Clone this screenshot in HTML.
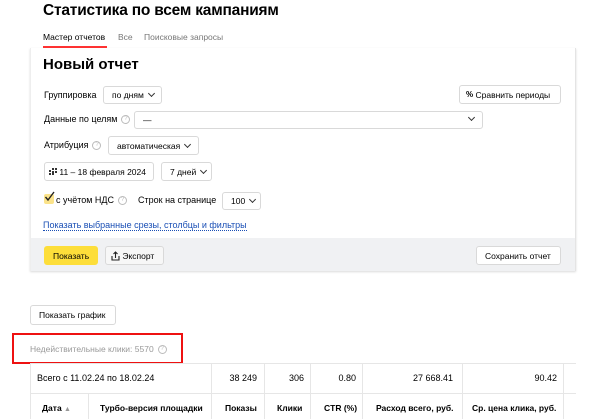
<!DOCTYPE html>
<html><head><meta charset="utf-8"><style>
*{box-sizing:border-box;margin:0;padding:0}
body{width:600px;height:419px;background:#fff;font-family:"Liberation Sans",sans-serif;color:#000;position:relative;overflow:hidden;font-size:9px}
.a{position:absolute;white-space:nowrap}
.btn{position:absolute;border:1px solid #d9d9d9;border-radius:3px;background:#fff;display:flex;align-items:center;padding-left:8px;font-size:8.5px}
.chev{display:inline-block;width:5px;height:5px;border-right:1px solid #333;border-bottom:1px solid #333;transform:rotate(45deg);margin-left:5px;margin-top:-3px}
.q{display:inline-block;width:9px;height:9px;border:1px solid #bbb;border-radius:50%;font-size:6px;color:#bbb;text-align:center;line-height:7px;margin-left:4px;vertical-align:middle}
.vl{position:absolute;top:363px;height:56px;width:1px;background:#e6e6e6}
</style></head><body>
<div class="a" style="left:43px;top:2px;font-size:15.5px;font-weight:bold;letter-spacing:-0.2px">Статистика по всем кампаниям</div>
<div class="a" style="left:43px;top:32px;font-size:8.5px">Мастер отчетов</div>
<div class="a" style="left:118px;top:32px;font-size:8.5px;color:#777">Все</div>
<div class="a" style="left:144px;top:32px;font-size:8.5px;color:#777">Поисковые запросы</div>
<div class="a" style="left:43px;top:46px;width:64px;height:2px;background:#f33"></div>
<div class="a" style="left:30px;top:48px;width:546px;height:223px;border-left:1px solid #eee;border-right:1px solid #e4e4e4;box-shadow:0 1px 2px rgba(0,0,0,.15)"></div>
<div class="a" style="left:31px;top:238px;width:544px;height:33px;background:#f0f1f3"></div>
<div class="a" style="left:43px;top:56px;font-size:15px;font-weight:bold">Новый отчет</div>
<div class="a" style="left:44px;top:90px">Группировка</div>
<div class="btn" style="left:103px;top:86px;width:59px;height:18px">по дням<span class="chev"></span></div>
<div class="btn" style="left:459px;top:85px;width:102px;height:19px;padding-left:6px"><b style="font-size:8px">%</b>&nbsp;Сравнить периоды</div>
<div class="a" style="left:44px;top:114px">Данные по целям<span class="q">?</span></div>
<div class="btn" style="left:134px;top:111px;width:349px;height:18px">—<span class="chev" style="position:absolute;right:8px;top:6px"></span></div>
<div class="a" style="left:44px;top:140px">Атрибуция<span class="q">?</span></div>
<div class="btn" style="left:108px;top:136px;width:91px;height:19px">автоматическая<span class="chev"></span></div>
<div class="btn" style="left:44px;top:162px;width:110px;height:19px;padding-left:4px"><svg width="8" height="7" viewBox="0 0 8 7"><g fill="#333"><rect x="0" y="2" width="2" height="2"/><rect x="3" y="0" width="2" height="2"/><rect x="6" y="0" width="2" height="2"/><rect x="3" y="3" width="2" height="2"/><rect x="6" y="3" width="2" height="2"/><rect x="0" y="5" width="2" height="2"/><rect x="3" y="5" width="2" height="2"/></g></svg>&nbsp;11 – 18 февраля 2024</div>
<div class="btn" style="left:161px;top:162px;width:51px;height:19px">7 дней<span class="chev"></span></div>
<div class="a" style="left:44px;top:194px;width:10px;height:10px;background:#fbe38a;border-radius:2px"></div>
<svg class="a" style="left:44px;top:191px" width="11" height="11" viewBox="0 0 11 11"><path d="M1.5 6 L4 9 L10 1" fill="none" stroke="#222" stroke-width="1.4"/></svg>
<div class="a" style="left:56px;top:195px">с учётом НДС<span class="q">?</span></div>
<div class="a" style="left:138px;top:195px">Строк на странице</div>
<div class="btn" style="left:222px;top:192px;width:39px;height:18px">100<span class="chev"></span></div>
<div class="a" style="left:43px;top:220px;color:#1a4fb5;border-bottom:1px dotted #1a4fb5">Показать выбранные срезы, столбцы и фильтры</div>
<div class="btn" style="left:44px;top:246px;width:54px;height:19px;background:#fdde3a;border-color:#fdde3a">Показать</div>
<div class="btn" style="left:105px;top:246px;width:59px;height:19px;padding-left:5px;background:#f7f7f7"><svg width="9" height="10" viewBox="0 0 9 10"><path d="M4.5 7 V1 M2.5 3 L4.5 1 L6.5 3 M1 5 V9 H8 V5" fill="none" stroke="#222" stroke-width="1.1"/></svg>&nbsp;Экспорт</div>
<div class="btn" style="left:476px;top:246px;width:85px;height:19px">Сохранить отчет</div>
<div class="btn" style="left:30px;top:305px;width:86px;height:20px">Показать график</div>
<div class="a" style="left:12px;top:333px;width:171px;height:31px;border:2px solid #e11"></div>
<div class="a" style="left:30px;top:344px;color:#999;font-size:8.5px">Недействительные клики: 5570<span class="q">?</span></div>
<div class="a" style="left:30px;top:363px;width:546px;height:1px;background:#e6e6e6"></div>
<div class="a" style="left:30px;top:393px;width:546px;height:1px;background:#e6e6e6"></div>
<div class="vl" style="left:30px"></div><div class="vl" style="left:211px"></div><div class="vl" style="left:264px"></div><div class="vl" style="left:310px"></div><div class="vl" style="left:362px"></div><div class="vl" style="left:462px"></div><div class="vl" style="left:563px"></div>
<div class="vl" style="left:88px;top:393px;height:26px"></div>
<div class="a" style="left:37px;top:373px">Всего с 11.02.24 по 18.02.24</div>
<div class="a" style="left:211px;width:46px;top:373px;text-align:right">38 249</div>
<div class="a" style="left:264px;width:40px;top:373px;text-align:right">306</div>
<div class="a" style="left:310px;width:46px;top:373px;text-align:right">0.80</div>
<div class="a" style="left:362px;width:91px;top:373px;text-align:right">27 668.41</div>
<div class="a" style="left:462px;width:95px;top:373px;text-align:right">90.42</div>
<div class="a" style="left:42px;top:403px;font-weight:bold;font-size:8.5px">Дата <span style="color:#999;font-size:7px">▲</span></div>
<div class="a" style="left:100px;top:403px;font-weight:bold;font-size:8.5px">Турбо-версия площадки</div>
<div class="a" style="left:225px;top:403px;font-weight:bold;font-size:8.5px">Показы</div>
<div class="a" style="left:277px;top:403px;font-weight:bold;font-size:8.5px">Клики</div>
<div class="a" style="left:324px;top:403px;font-weight:bold;font-size:8.5px">CTR (%)</div>
<div class="a" style="left:376px;top:403px;font-weight:bold;font-size:8.5px">Расход всего, руб.</div>
<div class="a" style="left:472px;top:403px;font-weight:bold;font-size:8.5px">Ср. цена клика, руб.</div>
</body></html>
